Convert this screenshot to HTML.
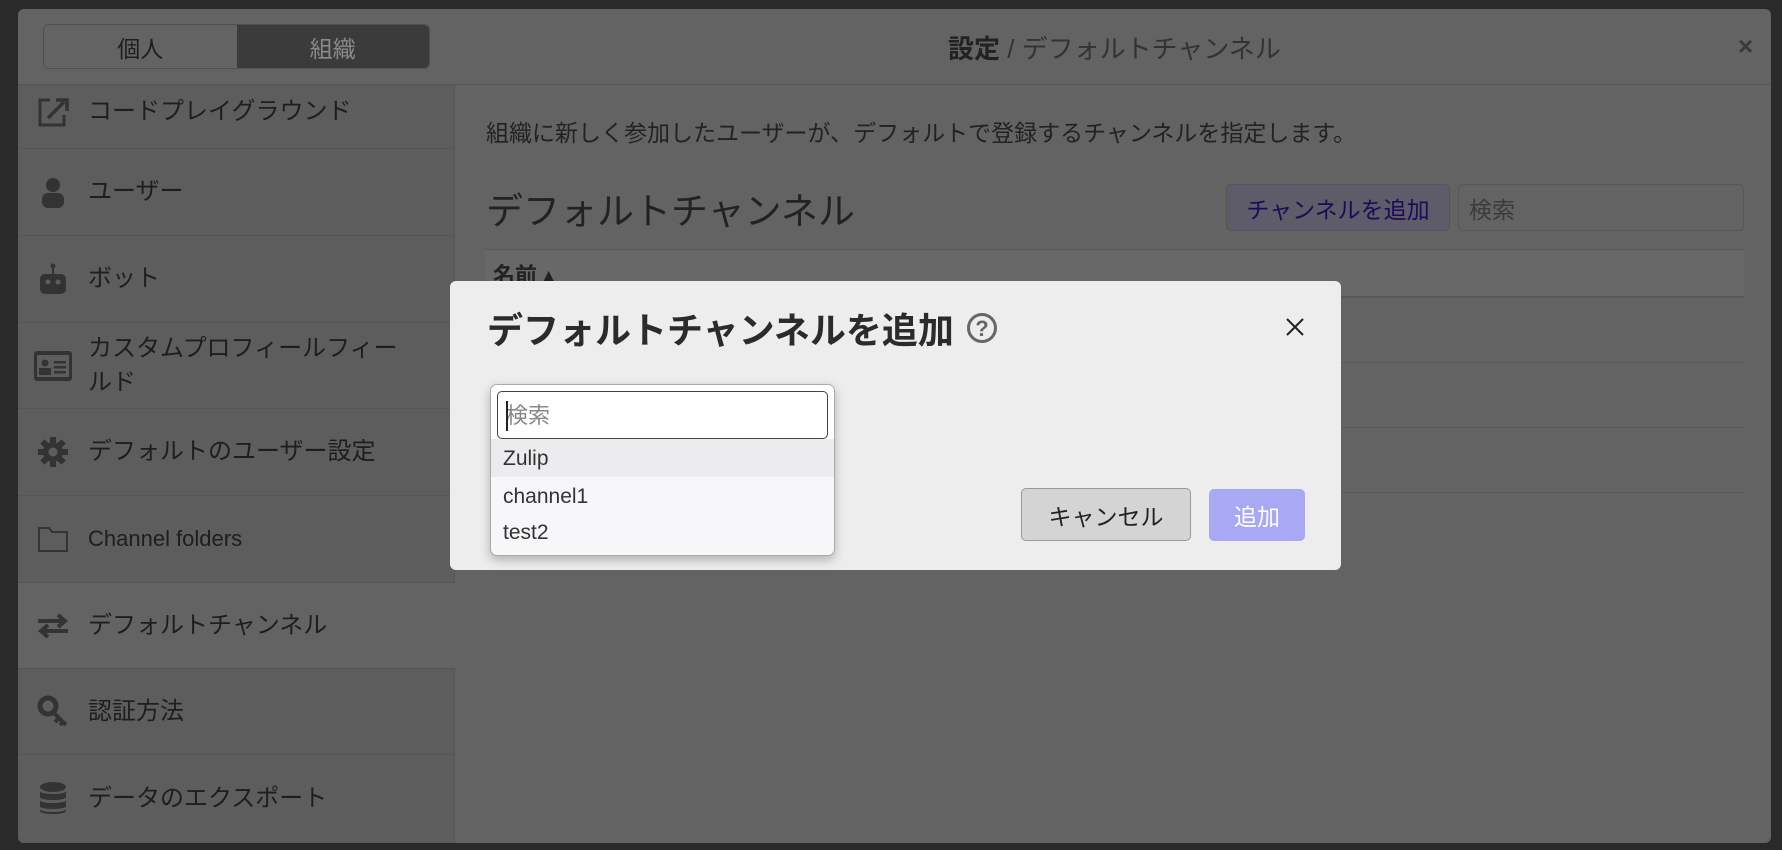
<!DOCTYPE html>
<html><head><meta charset="utf-8"><style>
*{box-sizing:border-box;margin:0;padding:0}
body{width:1782px;height:850px;overflow:hidden;background:#2a2a2a;font-family:"Liberation Sans","Noto Sans CJK JP",sans-serif;position:relative;color:#1e1e1e}
.abs{position:absolute}
.modal{left:18px;top:9px;width:1753px;height:834px;background:#636363;border-radius:6px;overflow:hidden}
.hdr{left:0;top:0;width:1753px;height:76px;border-bottom:1px solid #575757}
.tabs{left:25px;top:15px;width:387px;height:45px;border:1px solid #505050;border-radius:6px;overflow:hidden;display:flex;font-size:23px}
.tabs div{flex:1;display:flex;align-items:center;justify-content:center}
.side{left:0;top:76px;width:437px;height:758px;background:#5d5d5d;border-right:1px solid #575757}
.row{position:absolute;left:0;width:437px;border-bottom:1px solid #555;display:flex;align-items:center;font-size:24px;color:#1e1e1e}
.row .ic{width:70px;display:flex;justify-content:center}
.row span{line-height:34px}
.dlg{left:450px;top:281px;width:891px;height:289px;background:#ededed;border-radius:6px}
</style></head><body>
<div class="abs modal">
 <div class="abs hdr">
  <div class="abs tabs"><div style="background:#636363;color:#1e1e1e">個人</div><div style="background:#3b3b3b;color:#8a8a8a">組織</div></div>
  <div class="abs" style="left:930px;top:20px;font-size:26px;color:#333"><b style="color:#222">設定</b> / デフォルトチャンネル</div>
  <div class="abs" style="left:1720px;top:22px;font-size:26px;color:#3a3a3a;font-weight:bold">×</div>
 </div>
 <div class="abs side">
  <div class="row" style="top:-10px;height:74px"><div class="ic"><svg width="34" height="32" viewBox="0 0 34 32"><path d="M14 4H4v25h24V19" fill="none" stroke="#333" stroke-width="3"/><path d="M12 22 L28 6 M20 4h11v11" fill="none" stroke="#333" stroke-width="3.5"/></svg></div><span>コードプレイグラウンド</span></div>
  <div class="row" style="top:64px;height:87px"><div class="ic"><svg width="26" height="32"><circle cx="13" cy="9" r="7" fill="#333"/><rect x="2" y="17" width="22" height="15" rx="6" fill="#333"/></svg></div><span>ユーザー</span></div>
  <div class="row" style="top:151px;height:87px"><div class="ic"><svg width="30" height="34"><circle cx="15" cy="4" r="2.5" fill="#333"/><rect x="14" y="4" width="2" height="8" fill="#333"/><rect x="2" y="12" width="26" height="20" rx="5" fill="#333"/><circle cx="10" cy="20" r="2.5" fill="#5d5d5d"/><circle cx="20" cy="20" r="2.5" fill="#5d5d5d"/></svg></div><span>ボット</span></div>
  <div class="row" style="top:238px;height:86px"><div class="ic"><svg width="38" height="30"><rect x="0" y="0" width="38" height="30" rx="3" fill="#333"/><rect x="3" y="4" width="32" height="22" fill="#5d5d5d"/><circle cx="11" cy="12" r="3.5" fill="#333"/><rect x="5" y="17" width="12" height="7" fill="#333"/><rect x="20" y="10" width="12" height="2.5" fill="#333"/><rect x="20" y="15" width="12" height="2.5" fill="#333"/><rect x="20" y="20" width="12" height="2.5" fill="#333"/></svg></div><span>カスタムプロフィールフィー<br>ルド</span></div>
  <div class="row" style="top:324px;height:87px"><div class="ic"><svg width="32" height="32" viewBox="0 0 32 32"><g fill="#333"><circle cx="16" cy="16" r="10"/><rect x="13" y="1" width="6" height="30"/><rect x="1" y="13" width="30" height="6"/><rect x="13" y="1" width="6" height="30" transform="rotate(45 16 16)"/><rect x="13" y="1" width="6" height="30" transform="rotate(-45 16 16)"/></g><circle cx="16" cy="16" r="4.5" fill="#5d5d5d"/></svg></div><span>デフォルトのユーザー設定</span></div>
  <div class="row" style="top:411px;height:87px"><div class="ic"><svg width="32" height="28"><path d="M2 3h10l3 4h15v19H2z" fill="none" stroke="#333" stroke-width="2"/></svg></div><span style="font-size:22px">Channel folders</span></div>
  <div class="row" style="top:498px;height:86px;background:#636363"><div class="ic"><svg width="34" height="28"><path d="M2 9h26M22 3l7 6-7 6M32 19H6M12 13l-7 6 7 6" fill="none" stroke="#333" stroke-width="4"/></svg></div><span>デフォルトチャンネル</span></div>
  <div class="row" style="top:584px;height:86px"><div class="ic"><svg width="32" height="34"><circle cx="11" cy="11" r="8" fill="none" stroke="#333" stroke-width="5"/><path d="M16 17l13 13M22 23l-4 4M26 27l-3 3" stroke="#333" stroke-width="4"/></svg></div><span>認証方法</span></div>
  <div class="row" style="top:670px;height:88px;border:none"><div class="ic"><svg width="30" height="36"><g fill="#333"><ellipse cx="15" cy="6" rx="13" ry="5"/><path d="M2 10c0 4 26 4 26 0v6c0 4-26 4-26 0z"/><path d="M2 19c0 4 26 4 26 0v6c0 4-26 4-26 0z"/><path d="M2 28c0 4 26 4 26 0v2c0 4-26 4-26 0z"/></g></svg></div><span>データのエクスポート</span></div>
 </div>
 <div class="abs" style="left:468px;top:105px;font-size:23px;color:#222">組織に新しく参加したユーザーが、デフォルトで登録するチャンネルを指定します。</div>
 <div class="abs" style="left:468px;top:172px;font-size:37px;color:#222">デフォルトチャンネル</div>
 <div class="abs" style="left:1208px;top:175px;width:224px;height:47px;border:1px solid #555;border-radius:5px;background:#5d5c68;color:#1d0a5a;font-size:23px;display:flex;align-items:center;justify-content:center">チャンネルを追加</div>
 <div class="abs" style="left:1440px;top:175px;width:286px;height:47px;border:1px solid #575757;border-radius:5px;background:#636363;color:#3b3b3b;font-size:23px;padding-left:10px;display:flex;align-items:center">検索</div>
 <div class="abs" style="left:467px;top:240px;width:1259px;height:49px;background:#686868;border-top:1px solid #5a5a5a;border-bottom:2px solid #575757"><b style="position:absolute;left:8px;top:8px;font-size:22px;color:#222">名前 ▴</b></div>
 <div class="abs" style="left:467px;top:353px;width:1259px;height:1px;background:#595959"></div>
 <div class="abs" style="left:467px;top:418px;width:1259px;height:1px;background:#595959"></div>
 <div class="abs" style="left:467px;top:483px;width:1259px;height:1px;background:#595959"></div>
</div>
<div class="abs dlg">
 <div class="abs" style="left:37px;top:21px;font-size:36px;font-weight:bold;color:#2b2b2b">デフォルトチャンネルを追加</div>
 <svg class="abs" style="left:516px;top:31px" width="32" height="32"><circle cx="16" cy="16" r="13.5" fill="none" stroke="#666" stroke-width="3"/><text x="16" y="24" text-anchor="middle" font-size="22" font-weight="bold" fill="#666" font-family="Liberation Sans">?</text></svg>
 <svg class="abs" style="left:835px;top:36px" width="20" height="20"><path d="M2 2L18 18M18 2L2 18" stroke="#222" stroke-width="2"/></svg>
 <div class="abs" style="left:571px;top:207px;width:170px;height:53px;background:#d4d4d4;border:1px solid #9a9a9a;border-radius:5px;font-size:23px;display:flex;align-items:center;justify-content:center;color:#222">キャンセル</div>
 <div class="abs" style="left:759px;top:208px;width:96px;height:52px;background:#a8a8f4;border-radius:5px;font-size:23px;display:flex;align-items:center;justify-content:center;color:#fff">追加</div>
 <div class="abs" style="left:40px;top:103px;width:345px;height:172px;background:#f7f7f9;border:1px solid #aaa;border-radius:7px;box-shadow:0 4px 10px rgba(0,0,0,.25);overflow:hidden">
  <div style="height:54px;background:#fff;padding:6px"><div style="height:48px;border:1.5px solid #444;border-radius:5px;font-size:22px;color:#888;padding:6px 8px;position:relative">検索<span style="position:absolute;left:8px;top:9px;width:1.5px;height:30px;background:#222"></span></div></div>
  <div style="height:38px;background:#ececee;font-size:21px;padding:8px 12px;color:#333">Zulip</div>
  <div style="height:38px;font-size:21px;padding:8px 12px;color:#333">channel1</div>
  <div style="height:38px;font-size:21px;padding:6px 12px;color:#333">test2</div>
 </div>
</div>
</body></html>
